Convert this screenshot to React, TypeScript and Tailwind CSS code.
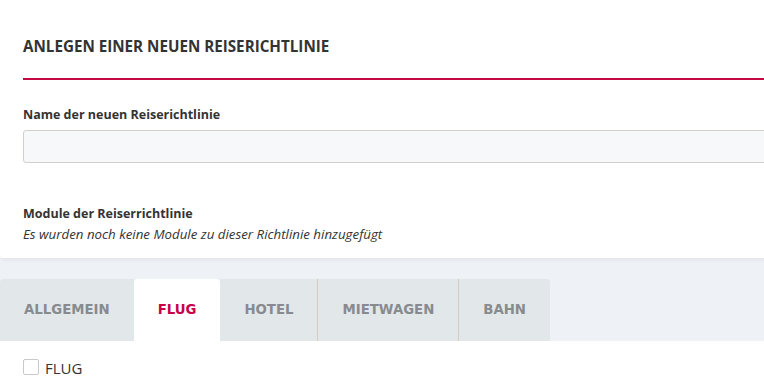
import React, { useState } from 'react';

const tabs = ['ALLGEMEIN', 'FLUG', 'HOTEL', 'MIETWAGEN', 'BAHN'];

const App: React.FC = () => {
    const [active, setActive] = useState('FLUG');
    const [checked, setChecked] = useState(false);

    return (
        <div className="min-h-[385px] w-[764px] overflow-hidden bg-white font-['Open_Sans',sans-serif] text-[#333]">
            {/* Form card */}
            <div className="w-[820px] bg-white px-[23px] pt-[37px] pb-[16px] shadow-[0_2px_4px_rgba(0,0,0,0.06)] rounded-bl-[4px] relative">
                <h2 className="text-[15.2px] leading-[18px] font-bold">ANLEGEN EINER NEUEN REISERICHTLINIE</h2>
                <div className="mt-[23px] h-[2px] bg-[#c40842]" />

                <label className="mt-[27px] block text-[12.5px] leading-[16px] font-bold">Name der neuen Reiserichtlinie</label>
                <input
                    type="text"
                    className="mt-[7px] block h-[33px] w-full rounded-[3px] border border-[#d3d0cb] bg-[#f7f8fa] px-3 text-[13px] outline-none"
                />

                <div className="mt-[43px] text-[12.5px] leading-[16px] font-bold">Module der Reiserrichtlinie</div>
                <div className="mt-[4px] text-[13.3px] leading-[16px] italic">Es wurden noch keine Module zu dieser Richtlinie hinzugefügt</div>
            </div>

            {/* Tabs */}
            <div className="bg-[#eef2f6] pt-[21px]">
                <div className="flex h-[62px]">
                    {tabs.map((tab, i) => {
                        const isActive = tab === active;
                        const prevActive = i > 0 && tabs[i - 1] === active;
                        const sep = i > 0 && !isActive && !prevActive;
                        return (
                            <button
                                key={tab}
                                onClick={() => setActive(tab)}
                                className={`flex items-center px-[24px] font-['DejaVu_Sans',sans-serif] text-[13.3px] font-bold ${
                                    isActive ? 'bg-white text-[#c8004a] rounded-t-[4px]' : 'bg-[#e2e7ea] text-[#878b8f]'
                                } ${sep ? 'border-l border-[#d2cdbf]' : ''} ${i === 0 ? 'rounded-tl-[4px]' : ''} ${
                                    i === tabs.length - 1 ? 'rounded-tr-[4px]' : ''
                                }`}
                            >
                                {tab}
                            </button>
                        );
                    })}
                </div>
            </div>

            {/* Tab content */}
            <div className="px-[23px] pt-[16px]">
                <label className="flex items-center gap-[6px] cursor-pointer">
                    <span
                        onClick={() => setChecked(!checked)}
                        className={`h-[16px] w-[16px] rounded-[2px] border ${checked ? 'border-[#c40842] bg-[#c40842]' : 'border-[#c9c9c9] bg-white'}`}
                    />
                    <span className="mt-[2px] text-[15px] leading-[18px]">FLUG</span>
                </label>
            </div>
        </div>
    );
};

export default App;
